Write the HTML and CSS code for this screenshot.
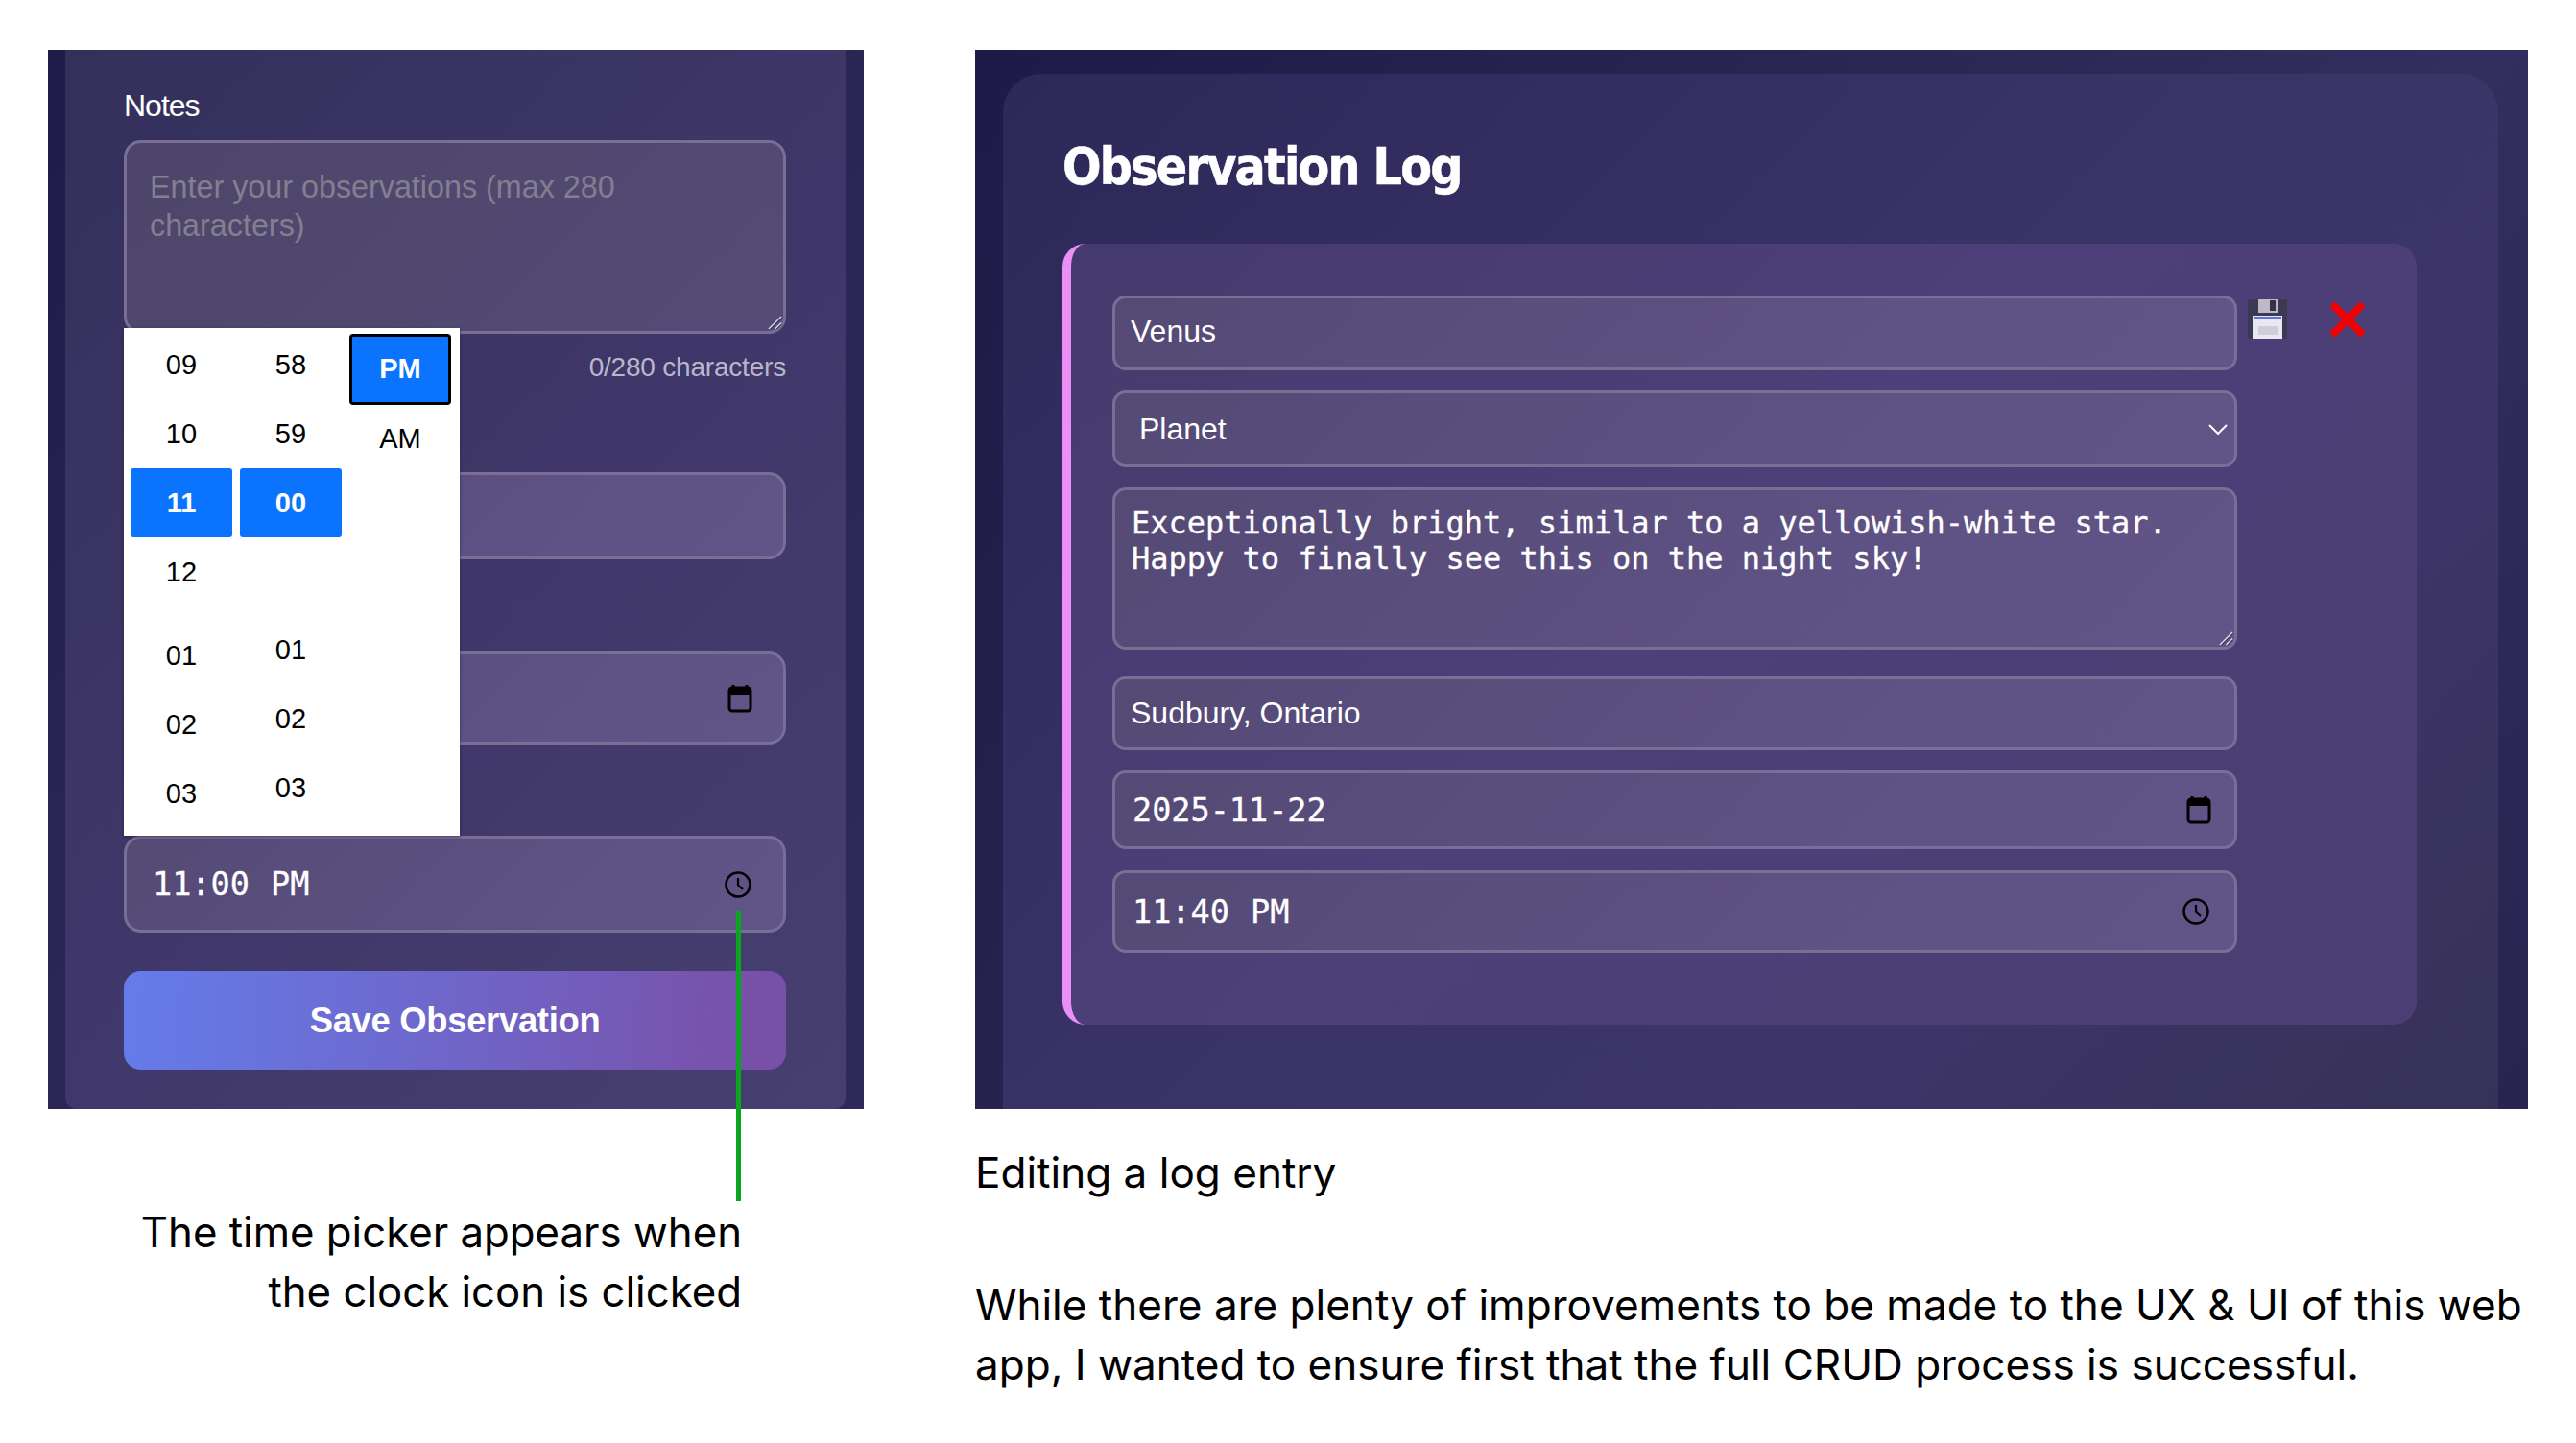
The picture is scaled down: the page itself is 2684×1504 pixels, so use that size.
FILE: index.html
```html
<!DOCTYPE html>
<html lang="en">
<head>
<meta charset="utf-8">
<title>Observation app screens</title>
<link rel="stylesheet" href="styles.css">
</head>
<body>
<main class="page">
  <figure class="shot shot-form">
    <div class="panel panel-left">
      <div class="sheet sheet-left">
        <div class="form-label">Notes</div>
        <div class="field field-notes">
          <span class="placeholder">Enter your observations (max 280<br>characters)</span>
          <svg class="grip" viewBox="0 0 16 16"><path d="M15 1 1 15M15 8l-7 7" fill="none" stroke="#d8d4e4" stroke-width="1.6"/><path d="M15.5 2.5 2.5 15.5M15.5 9.500 9.500 15.500" fill="none" stroke="#2b2742" stroke-width="1"/></svg>
        </div>
        <div class="count">0/280 characters</div>
        <div class="field field-blank"></div>
        <div class="field field-date-left">
          <svg class="icon-cal" viewBox="0 0 26 30"><path d="M6 1v4M20 1v4" stroke="#000" stroke-width="3"/><rect x="2" y="4" width="22" height="24" rx="3" fill="none" stroke="#000" stroke-width="3"/><rect x="2" y="4" width="22" height="7" fill="#000"/></svg>
        </div>
        <div class="field field-time-left mono">
          <span>11:00 PM</span>
          <svg class="icon-clock" viewBox="0 0 28 28"><circle cx="14" cy="14" r="12.500" fill="none" stroke="#000" stroke-width="2.600"/><path d="M14 7v7.500l5 4.500" fill="none" stroke="#000" stroke-width="2.200"/></svg>
        </div>
        <div class="save-button">Save Observation</div>
        <div class="time-popup">
          <div class="time-col">
            <div class="cell">09</div>
            <div class="cell">10</div>
            <div class="cell selected">11</div>
            <div class="cell">12</div>
            <div class="spacer-hours"></div>
            <div class="cell">01</div>
            <div class="cell">02</div>
            <div class="cell">03</div>
          </div>
          <div class="time-col">
            <div class="cell">58</div>
            <div class="cell">59</div>
            <div class="cell selected">00</div>
            <div class="spacer-minutes"></div>
            <div class="cell">01</div>
            <div class="cell">02</div>
            <div class="cell">03</div>
          </div>
          <div class="time-col col-period">
            <div class="cell selected focused">PM</div>
            <div class="cell">AM</div>
          </div>
        </div>
      </div>
    </div>
    <div class="green-line"></div>
    <figcaption class="caption caption-left">The time picker appears when<br>the clock icon is clicked</figcaption>
  </figure>

  <figure class="shot shot-log">
    <div class="panel panel-right">
      <div class="sheet sheet-right">
        <h1 class="log-title">Observation Log</h1>
        <div class="card">
          <div class="row-first">
            <div class="field edit-name">Venus</div>
            <svg class="icon-floppy" viewBox="0 0 41 41">
              <rect width="41" height="41" rx="2" fill="#3b3a52"/>
              <rect x="11" y="0" width="20" height="14" fill="#bdbac6"/>
              <rect x="23" y="1" width="6" height="11" fill="#33324a"/>
              <rect x="5" y="17" width="31" height="24" fill="#e9e8f2"/>
              <rect x="6" y="18" width="29" height="3" fill="#5f74dd"/>
              <rect x="11" y="28" width="20" height="9" fill="#cfcdda"/>
            </svg>
            <svg class="icon-x" viewBox="0 0 40 40"><path d="M4 4 36 36M36 4 4 36" stroke="#f00000" stroke-width="8" fill="none"/></svg>
          </div>
          <div class="field edit-type">
            <span>Planet</span>
            <svg class="chevron" viewBox="0 0 20 11"><path d="M1 1l9 9 9-9" fill="none" stroke="#fff" stroke-width="2"/></svg>
          </div>
          <div class="field edit-notes mono-area">Exceptionally bright, similar to a yellowish-white star.<br>Happy to finally see this on the night sky!
            <svg class="grip" viewBox="0 0 16 16"><path d="M15 1 1 15M15 8l-7 7" fill="none" stroke="#d8d4e4" stroke-width="1.600"/><path d="M15.500 2.500 2.500 15.500M15.500 9.500 9.500 15.500" fill="none" stroke="#2b2742" stroke-width="1"/></svg>
          </div>
          <div class="field edit-place">Sudbury, Ontario</div>
          <div class="field edit-date mono">
            <span>2025-11-22</span>
            <svg class="icon-cal" viewBox="0 0 26 30"><path d="M6 1v4M20 1v4" stroke="#000" stroke-width="3"/><rect x="2" y="4" width="22" height="24" rx="3" fill="none" stroke="#000" stroke-width="3"/><rect x="2" y="4" width="22" height="7" fill="#000"/></svg>
          </div>
          <div class="field edit-time mono">
            <span>11:40 PM</span>
            <svg class="icon-clock" viewBox="0 0 28 28"><circle cx="14" cy="14" r="12.500" fill="none" stroke="#000" stroke-width="2.600"/><path d="M14 7v7.500l5 4.500" fill="none" stroke="#000" stroke-width="2.200"/></svg>
          </div>
        </div>
      </div>
    </div>
    <figcaption class="caption caption-edit">Editing a log entry</figcaption>
    <p class="caption caption-note">While there are plenty of improvements to be made to the UX &amp; UI of this web app, I wanted to ensure first that the full CRUD process is successful.</p>
  </figure>
</main>
</body>
</html>
```
FILE: styles.css
```css
* { box-sizing: border-box; }
html, body { margin: 0; background: #fff; }
body { width: 2684px; height: 1504px; overflow: hidden; font-family: "Liberation Sans", Arial, sans-serif; color: #fff; }
.page { display: flex; padding: 52px 50px 0; gap: 116px; }
.shot { margin: 0; position: relative; }
.shot-form { width: 850px; }
.shot-log { width: 1618px; }

.panel { height: 1104px; overflow: hidden; display: flex; }
.panel-left { padding: 0 19px 0 18px; background: linear-gradient(135deg, #1e1b48 0%, #2a2553 45%, #2e2a5a 100%); }
.panel-right { padding: 25px 31px 0 28.500px; background: linear-gradient(120deg, #1d1a47 0%, #2a2651 40%, #332e5e 70%, #28234f 100%); }
.sheet { flex: 1; position: relative; }
.sheet-left { padding: 40px 62px 0 61px; background: linear-gradient(135deg, #33305a 0%, #3f3769 50%, #463f6f 100%); border-radius: 0 0 12px 12px; }
.sheet-right { padding: 67px 85px 0 62.500px; height: 1200px; background: linear-gradient(135deg, #2c2858 0%, #3a3466 45%, #3d3568 70%, #353155 100%); border-radius: 40px 40px 0 0; }

.form-label { font-size: 32px; line-height: 36px; height: 54px; letter-spacing: -1px; }
.field { border: 3.500px solid #786e96; border-radius: 18px; background: linear-gradient(135deg, #544a75 0%, #5e5183 60%, #615486 100%); position: relative; font-size: 32px; display: flex; align-items: center; justify-content: space-between; }
.mono { font-family: "DejaVu Sans Mono", "Liberation Mono", monospace; font-size: 33.500px; word-spacing: 2px; -webkit-text-stroke: 0.300px #fff; }
.mono-area { font-family: "DejaVu Sans Mono", "Liberation Mono", monospace; -webkit-text-stroke: 0.300px #fff; }

.field-notes { height: 202px; display: block; padding: 26px 24px; background: linear-gradient(135deg, #4d4569 0%, #554b77 100%); }
.placeholder { display: block; font-size: 32.300px; line-height: 40px; color: #847f90; }
.grip { position: absolute; right: 1px; bottom: 1px; width: 15px; height: 15px; }
.count { height: 144px; padding-top: 19px; text-align: right; font-size: 28px; line-height: 32px; color: #bab6cc; letter-spacing: -0.200px; }
.field-blank { height: 91px; }
.field-date-left { height: 97px; margin-top: 96px; justify-content: flex-end; padding-right: 32px; }
.field-time-left { height: 101px; margin-top: 95px; padding: 0 33px 0 27px; }
.save-button { height: 103px; margin-top: 40px; border-radius: 18px; background: linear-gradient(95deg, #647cea 0%, #6e68cc 45%, #7850a8 95%); display: flex; align-items: center; justify-content: center; font-weight: 700; font-size: 36.400px; letter-spacing: -0.300px; }

.time-popup { position: absolute; left: 61px; top: 290px; width: 350px; height: 529px; background: #fff; color: #000; display: grid; grid-template-columns: 106px 106px 106px; column-gap: 8px; padding: 2px 0 0 6.500px; font-size: 29px; box-shadow: 0 1px 3px rgba(20, 15, 50, .5); }
.time-col { display: flex; flex-direction: column; }
.cell { height: 72px; flex: none; display: flex; align-items: center; justify-content: center; padding-left: 1px; }
.selected { background: #0a74ff; color: #fff; font-weight: 700; border-radius: 3px; }
.focused { border: 3.500px solid #000; border-radius: 4px; margin-top: 3.500px; height: 74px; }
.spacer-hours { height: 15px; flex: none; }
.spacer-minutes { height: 81px; flex: none; }

.icon-cal { width: 26px; height: 30px; flex: none; }
.icon-clock { width: 28px; height: 28px; flex: none; }

.green-line { position: absolute; left: 717px; top: 898px; width: 5px; height: 302px; background: #0ba620; }

.caption { margin: 0; color: #000; font-family: Inter, "Liberation Sans", sans-serif; font-size: 44.050px; line-height: 62px; }
.caption-left { margin-top: 98px; padding-right: 127px; text-align: right; font-size: 43.750px; }
.caption-edit { margin-top: 35px; }
.caption-note { margin-top: 75.500px; }

.log-title { margin: 0; font-family: "DejaVu Sans Condensed", "DejaVu Sans", sans-serif; font-stretch: condensed; font-size: 53px; line-height: 60px; font-weight: 700; letter-spacing: -1.750px; -webkit-text-stroke: 0.600px #fff; }
.card { margin-top: 50px; height: 814px; padding: 54px 0 0 43px; border-left: 9px solid #e98ff6; border-radius: 24px; background: linear-gradient(135deg, #453a6d 0%, #4d3f79 45%, #4a3e72 100%); }
.row-first { display: flex; align-items: flex-start; }
.edit-name { width: 1172px; height: 78px; padding: 0 0 3px 16px; border-radius: 14px; justify-content: flex-start; }
.icon-floppy { width: 41px; height: 41px; margin: 4px 0 0 11px; flex: none; }
.icon-x { width: 40px; height: 40px; margin: 5px 0 0 43px; flex: none; }
.edit-type, .edit-notes, .edit-place, .edit-date, .edit-time { width: 1172px; border-radius: 14px; }
.edit-type { height: 80px; margin-top: 21px; padding: 0 7px 0 25px; }
.chevron { width: 20px; height: 11px; }
.edit-notes { height: 169px; margin-top: 21px; display: block; padding: 16px 17px; line-height: 37.200px; }
.edit-place { height: 77px; margin-top: 28px; padding-left: 16px; justify-content: flex-start; }
.edit-date { height: 82px; margin-top: 21px; padding: 0 24px 0 18px; }
.edit-time { height: 86px; margin-top: 22px; padding: 0 26px 0 18px; }
```
